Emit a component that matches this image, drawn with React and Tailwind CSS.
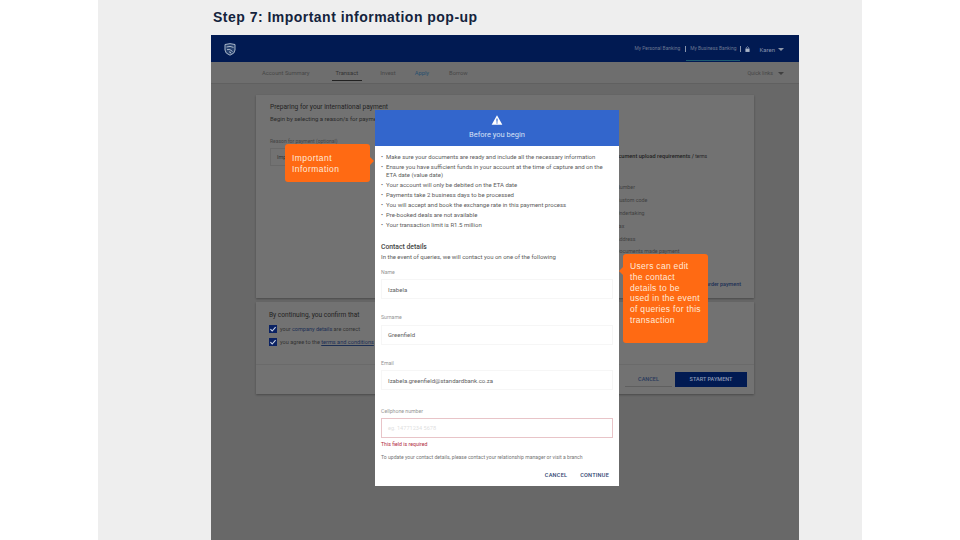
const sans = { fontFamily: '"Roboto", "Liberation Sans", sans-serif' };

function Tri({ className }) {
  return (
    <svg viewBox="0 0 16 14" className={className} fill="none">
      <path d="M8 0.5 L15.5 13.5 H0.5 Z" fill="#ffffff" />
      <rect x="7.2" y="5" width="1.6" height="4.5" fill="#3366cc" />
      <rect x="7.2" y="10.3" width="1.6" height="1.6" fill="#3366cc" />
    </svg>
  );
}

function Shield() {
  return (
    <svg viewBox="0 0 12 13" className="w-[12px] h-[13px]" fill="#25406f" stroke="#a9b6c9" strokeWidth="1">
      <path d="M1 1.5 Q6 -0.2 11 1.5 V7 Q11 10.5 6 12.2 Q1 10.5 1 7 Z" />
      <path d="M2.5 4 Q6 2.6 9.5 4.4 M3 6.6 Q6 5.6 8.5 8.5 M5 9 Q6.5 8.4 7 10.5" fill="none" />
    </svg>
  );
}

function Caret() {
  return <span className="w-0 h-0 border-x-[3px] border-x-transparent border-t-[3px] border-t-[#8f98aa]" />;
}

function Check() {
  return (
    <span className="w-[8px] h-[8px] bg-[#0a2263] flex items-center justify-center">
      <svg viewBox="0 0 8 8" className="w-[8px] h-[8px]" fill="none" stroke="#c9d2e4" strokeWidth="1.1">
        <path d="M1.4 4.2 L3.2 6 L6.6 2.2" />
      </svg>
    </span>
  );
}

function Field({ label, value }) {
  return (
    <div className="flex flex-col">
      <div className="text-[5.2px] leading-[8px] text-[#959595] mb-[3.5px]">{label}</div>
      <div className="h-[20px] border border-[#f6f6f6] flex items-center pl-[6px] text-[6px] text-[#5f5f5f]">{value}</div>
    </div>
  );
}

const bullets = [
  ["Make sure your documents are ready and include all the necessary information"],
  ["Ensure you have sufficient funds in your account at the time of capture and on the", "ETA date (value date)"],
  ["Your account will only be debited on the ETA date"],
  ["Payments take 2 business days to be processed"],
  ["You will accept and book the exchange rate in this payment process"],
  ["Pre-booked deals are not available"],
  ["Your transaction limit is R1.5 million"],
];

function Modal() {
  return (
    <div className="absolute left-[375px] top-[110px] w-[244px] h-[376px] bg-white flex flex-col" style={sans}>
      <div className="h-[36px] shrink-0 bg-[#3366cc] flex flex-col items-center pt-[5px]">
        <Tri className="w-[12px] h-[10px]" />
        <div className="text-[7.5px] leading-[10px] mt-[5px] text-[#d5e0f5]">Before you begin</div>
      </div>
      <div className="flex flex-col px-[6px] pt-[7px] flex-1">
        <ul className="flex flex-col gap-[2.1px] text-[6px] leading-[7.9px] text-[#5c5c5c]">
          {bullets.map((b, i) => (
            <li key={i} className="flex">
              <span className="w-[5px] shrink-0">•</span>
              <span className="whitespace-nowrap">
                {b.map((l, j) => (
                  <span key={j} className="block">{l}</span>
                ))}
              </span>
            </li>
          ))}
        </ul>
        <div className="mt-[14px] text-[6.8px] leading-[9px] font-medium text-[#444444]">Contact details</div>
        <div className="mt-[1px] text-[6px] leading-[8px] text-[#5c5c5c]">In the event of queries, we will contact you on one of the following</div>
        <div className="mt-[7px] flex flex-col gap-[14px]">
          <Field label="Name" value="Izabela" />
          <Field label="Surname" value="Greenfield" />
          <Field label="Email" value="Izabela.greenfield@standardbank.co.za" />
        </div>
        <div className="mt-[16.5px] flex flex-col">
          <div className="text-[5.2px] leading-[8px] text-[#959595] mb-[3px]">Cellphone number</div>
          <div className="h-[20px] border border-[#e8c4c8] flex items-center pl-[6px] text-[5.6px] text-[#dfdfdf]">eg. 14771234 5678</div>
          <div className="mt-[3px] text-[5.2px] leading-[7px] text-[#b02a3c]">This field is required</div>
          <div className="mt-[6px] text-[5.1px] leading-[7px] text-[#757575] whitespace-nowrap">To update your contact details, please contact your relationship manager or visit a branch</div>
        </div>
        <div className="mt-[10px] flex justify-end gap-[13px] pr-[4px] text-[5.6px] leading-[8px] font-medium text-[#2d4470] tracking-[0.2px]">
          <span>CANCEL</span>
          <span>CONTINUE</span>
        </div>
      </div>
    </div>
  );
}

function Callout({ className, arrowClass, children }) {
  return (
    <div className={"absolute bg-[#ff6a13] rounded-[3px] text-[#ffe9d8] text-[8.5px] " + className} style={{ fontFamily: '"Liberation Sans", sans-serif' }}>
      {children}
      <span className={"absolute w-0 h-0 border-y-[4px] border-y-transparent " + arrowClass} />
    </div>
  );
}

export default function App() {
  return (
    <div className="relative w-[960px] h-[540px] overflow-hidden bg-white">
      <div className="mx-auto w-[764px] h-[540px] bg-[#eeeeee] pl-[113px] flex flex-col">
        <div className="h-[35px] shrink-0 pt-[9px] pl-[2px] text-[14px] leading-[17px] font-bold tracking-[0.48px] text-[#14233c]" style={{ fontFamily: '"Liberation Sans", sans-serif' }}>
          Step 7: Important information pop-up
        </div>
        <div className="w-[588px] flex-1 bg-[#686868] flex flex-col" style={sans}>
          <div className="h-[27px] shrink-0 bg-[#011a52] flex items-center pt-[1px] pl-[13px] pr-[15px]">
            <Shield />
            <div className="ml-auto flex items-center text-[4.9px] text-[#6b7791]">
              <span>My Personal Banking</span>
              <span className="mx-[4.5px] w-px h-[6px] bg-[#8a95ac]" />
              <span className="relative">My Business Banking<span className="absolute -left-[4px] -right-[4px] top-[15px] h-[1px] bg-[#1d5a70]" /></span>
              <span className="mx-[4px] w-px h-[6px] bg-[#8a95ac]" />
              <svg viewBox="0 0 6 7" className="w-[5px] h-[6px] mr-[9px]" fill="#a9b4c8"><rect x="0.5" y="3" width="5" height="4" /><path d="M1.5 3 V2 Q3 -0.6 4.5 2 V3" fill="none" stroke="#a9b4c8" strokeWidth="0.8" /></svg>
              <span className="text-[6px] text-[#8490aa] mr-[3px]">Karen</span>
              <Caret />
            </div>
          </div>
          <div className="h-[22px] shrink-0 bg-[#6e6e6e] border-b border-[#606060] flex items-center pt-[2px] pl-[51px] pr-[15px] text-[5.8px] text-[#474747]">
            <span className="mr-[26px]">Account Summary</span>
            <span className="relative mr-[22px] text-[#333333]">Transact<span className="absolute -left-[4px] -right-[4px] top-[11px] h-px bg-[#222222]" /></span>
            <span className="mr-[19px]">Invest</span>
            <span className="mr-[20px] text-[#27506f]">Apply</span>
            <span>Borrow</span>
            <span className="ml-auto mr-[5px] text-[5.3px]">Quick links</span>
            <span className="w-0 h-0 border-x-[3px] border-x-transparent border-t-[3px] border-t-[#3f3f3f]" />
          </div>
          <div className="flex-1 pt-[11px] pl-[45px] pr-[45px] flex flex-col gap-[4px]">
            <div className="h-[203px] bg-[#727272] shadow-[0_1px_2px_rgba(0,0,0,0.3)] pl-[14px] pt-[8px] relative text-[#1f1f1f]">
              <div className="text-[6.6px] leading-[9px] text-[#222222]">Preparing for your international payment</div>
              <div className="mt-[3px] text-[6px] leading-[8px] text-[#2a2a2a] whitespace-nowrap">Begin by selecting a reason/s for payment</div>
              <div className="mt-[15px] text-[5px] leading-[7px] text-[#444444]">Reason for payment (optional)</div>
              <div className="mt-[3px] h-[18px] w-[100px] border border-[#686868] flex items-center pl-[6px] text-[5.5px] text-[#333333]">Import</div>
              <div className="absolute right-[47px] top-[57px] text-[5.6px] leading-[8px] text-[#222222] whitespace-nowrap font-medium">Important document upload requirements / <span className="text-[4.5px] font-normal">terms</span></div>
              <div className="absolute left-[360px] top-[88px] flex flex-col gap-[4.9px] text-[5.3px] leading-[8px] text-[#3f3f3f] whitespace-nowrap">
                <span>Number</span>
                <span>Custom code</span>
                <span>Undertaking</span>
                <span>Tax</span>
                <span>Address</span>
                <span>Documents made payment</span>
              </div>
              <div className="absolute right-[13px] top-[185px] text-[5.4px] leading-[8px] text-[#1c2f55] font-medium whitespace-nowrap">order payment</div>
            </div>
            <div className="h-[92px] bg-[#727272] shadow-[0_1px_2px_rgba(0,0,0,0.3)] flex flex-col relative">
              <div className="pl-[13px] pt-[9px] flex flex-col">
                <div className="text-[6.6px] leading-[9px] text-[#222222]">By continuing, you confirm that</div>
                <div className="mt-[5px] flex items-center gap-[3px] text-[5.5px] leading-[8px] text-[#333333]">
                  <Check />
                  <span>your <span className="text-[#1c2f55]">company details</span> are correct</span>
                </div>
                <div className="mt-[5px] flex items-center gap-[3px] text-[5.6px] leading-[8px] text-[#333333]">
                  <Check />
                  <span>you agree to the <span className="underline text-[#1c2f55]">terms and conditions</span></span>
                </div>
              </div>
              <div className="mt-auto h-[30px] border-t border-[#6a6a6a] flex items-center justify-end pr-[7px] gap-[3px] text-[5.5px] font-medium">
                <div className="w-[47px] h-[15px] flex items-center justify-center text-[#28395c] border-b border-[#5f5f5f]">CANCEL</div>
                <div className="w-[72px] h-[15px] bg-[#011a52] flex items-center justify-center text-[#8e99b2]">START PAYMENT</div>
              </div>
            </div>
          </div>
        </div>
      </div>
      <Modal />
      <Callout className="left-[285px] top-[144px] w-[85px] h-[38px] pl-[7px] pt-[9px] leading-[11px] tracking-[0.45px]" arrowClass="right-[-4px] top-[13px] border-l-[4px] border-l-[#ff6a13]">
        <div>Important</div>
        <div>Information</div>
      </Callout>
      <Callout className="left-[623px] top-[254px] w-[85px] h-[89px] pl-[7px] pt-[7px] leading-[10.8px] tracking-[0.3px]" arrowClass="left-[-4px] top-[13px] border-r-[4px] border-r-[#ff6a13]">
        <div>Users can edit</div>
        <div>the contact</div>
        <div>details to be</div>
        <div>used in the event</div>
        <div>of queries for this</div>
        <div>transaction</div>
      </Callout>
    </div>
  );
}
